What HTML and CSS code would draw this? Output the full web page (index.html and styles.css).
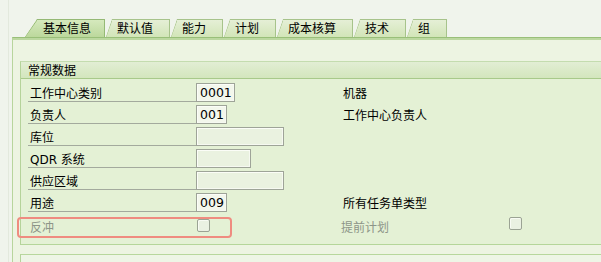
FILE: index.html
```html
<!DOCTYPE html>
<html lang="zh">
<head>
<meta charset="utf-8">
<link rel="stylesheet" href="styles.css">
</head>
<body>
<div class="frame">
  <div class="tabs">
    <div class="tab active">基本信息</div>
    <div class="tab">默认值</div>
    <div class="tab">能力</div>
    <div class="tab">计划</div>
    <div class="tab">成本核算</div>
    <div class="tab">技术</div>
    <div class="tab">组</div>
  </div>
  <div class="panel">
    <div class="group">
      <div class="group-head">常规数据</div>
      <div class="group-body">
        <div class="form">
          <div class="lbl">工作中心类别</div>
          <div class="cell"><span class="field filled w38">0001</span></div>
          <div class="rlbl">机器</div>
          <div></div>

          <div class="lbl">负责人</div>
          <div class="cell"><span class="field filled w30">001</span></div>
          <div class="rlbl">工作中心负责人</div>
          <div></div>

          <div class="lbl">库位</div>
          <div class="cell"><span class="field w87"></span></div>
          <div></div>
          <div></div>

          <div class="lbl">QDR 系统</div>
          <div class="cell"><span class="field w54"></span></div>
          <div></div>
          <div></div>

          <div class="lbl">供应区域</div>
          <div class="cell"><span class="field w87"></span></div>
          <div></div>
          <div></div>

          <div class="lbl">用途</div>
          <div class="cell"><span class="field filled w30">009</span></div>
          <div class="rlbl">所有任务单类型</div>
          <div></div>

          <div class="highlight">
            <span class="dlbl">反冲</span>
            <span class="check"></span>
          </div>
          <div class="rlbl disabled last">提前计划</div>
          <div class="last"><span class="check"></span></div>
        </div>
      </div>
    </div>
    <div class="group stub"></div>
  </div>
</div>
</body>
</html>
```
FILE: styles.css
```css
html, body {
  margin: 0;
  padding: 0;
  background: #f0f4ec;
  overflow: hidden;
}
body {
  width: 601px;
  height: 262px;
  font-family: "DejaVu Sans", "Noto Sans CJK SC", sans-serif;
  font-size: 12px;
  color: #000;
}
.frame {
  margin-left: 8px;
  border-left: 1px solid #e3e9dd;
  padding-left: 3px;
  padding-top: 19px;
  height: 243px;
}
.tabs {
  display: flex;
  gap: 1px;
  padding-left: 13px;
  height: 18px;
}
.tab {
  height: 17px;
  line-height: 19px;
  padding: 0 16px 0 11px;
  border-top: 1px solid #a7c38b;
  border-right: 1px solid #a7c38b;
  background:
    linear-gradient(to bottom right, transparent calc(50% - 0.8px), #a7c38b 50%, transparent calc(50% + 0.8px)) no-repeat 0 0 / 6px 100%,
    linear-gradient(#e5efd6, #d2e5b8);
  clip-path: polygon(6px 0, 100% 0, 100% 100%, 0 100%);
  white-space: nowrap;
}
.tab.active {
  padding: 0 13px 0 18px;
  border-color: #95b975;
  background:
    linear-gradient(to bottom right, transparent calc(50% - 0.8px), #95b975 50%, transparent calc(50% + 0.8px)) no-repeat 0 0 / 12px 100%,
    linear-gradient(#d5e9bd, #bcd89c);
  clip-path: polygon(12px 0, 100% 0, 100% 100%, 0 100%);
}
.panel {
  border-top: 1px solid #99bf79;
  box-shadow: inset 0 2px 0 #bcd8a0;
  padding-top: 23px;
  border-left: 1px solid #b8d59d;
  background: #edf4e2;
  height: 201px;
  overflow: hidden;
}
.group {
  margin-left: 7px;
  border-left: 1px solid #b5d39a;
  border-top: 1px solid #c4dcaf;
}
.group-head {
  height: 16px;
  line-height: 18px;
  padding-left: 7px;
  background: linear-gradient(#e2eed4, #d3e6bd);
  border-bottom: 1px solid #a8c98a;
}
.group-body {
  background: #e4f1d5;
  padding: 4px 0 10px 7px;
  border-bottom: 1px solid #b5d69a;
}
.form {
  display: grid;
  grid-template-columns: 168px 147px 166px 13px;
  grid-auto-rows: 19px;
  row-gap: 3px;
}
.lbl {
  border-bottom: 1px solid #a3aa9d;
  padding-left: 2px;
  padding-top: 2px;
  line-height: 18px;
  white-space: nowrap;
  overflow: visible;
}
.cell {
  display: flex;
}
.field {
  box-sizing: border-box;
  height: 19px;
  border: 1px solid #9ea498;
  box-shadow: inset 1px 1px 0 #fbfdf7, inset -1px -1px 0 #f6f9f1;
  background: #eaf2e0;
  line-height: 18px;
  padding-left: 3px;
  font-size: 12.5px;
}
.field.filled {
  background: #f3f7ec;
}
.w38 { width: 39px; }
.w30 { width: 31px; }
.w87 { width: 88px; }
.w54 { width: 55px; }
.rlbl {
  padding-top: 2px;
  line-height: 19px;
  white-space: nowrap;
}
.disabled {
  color: #8d9588;
}
.last {
  margin-top: 2px;
}
.rlbl.last {
  margin-left: -2px;
  margin-top: 2px;
}
.highlight {
  grid-column: 1 / 3;
  justify-self: start;
  margin-left: -11px;
  margin-top: 2px;
  width: 211px;
  height: 17px;
  border: 2px solid #ef8c80;
  border-radius: 4px;
  display: flex;
  align-items: flex-start;
}
.dlbl {
  color: #8d9588;
  padding-left: 11px;
  width: 167px;
  line-height: 19px;
}
.check {
  display: block;
  box-sizing: border-box;
  width: 13px;
  height: 13px;
  border: 1px solid #9ba394;
  border-radius: 2px;
  background: #eaf1e2;
  box-shadow: inset 1px 1px 0 #f8fbf4;
}
.group.stub {
  margin-top: 9px;
  height: 10px;
  background: #eef5e6;
  border-top: 1px solid #b8d79d;
}
```
